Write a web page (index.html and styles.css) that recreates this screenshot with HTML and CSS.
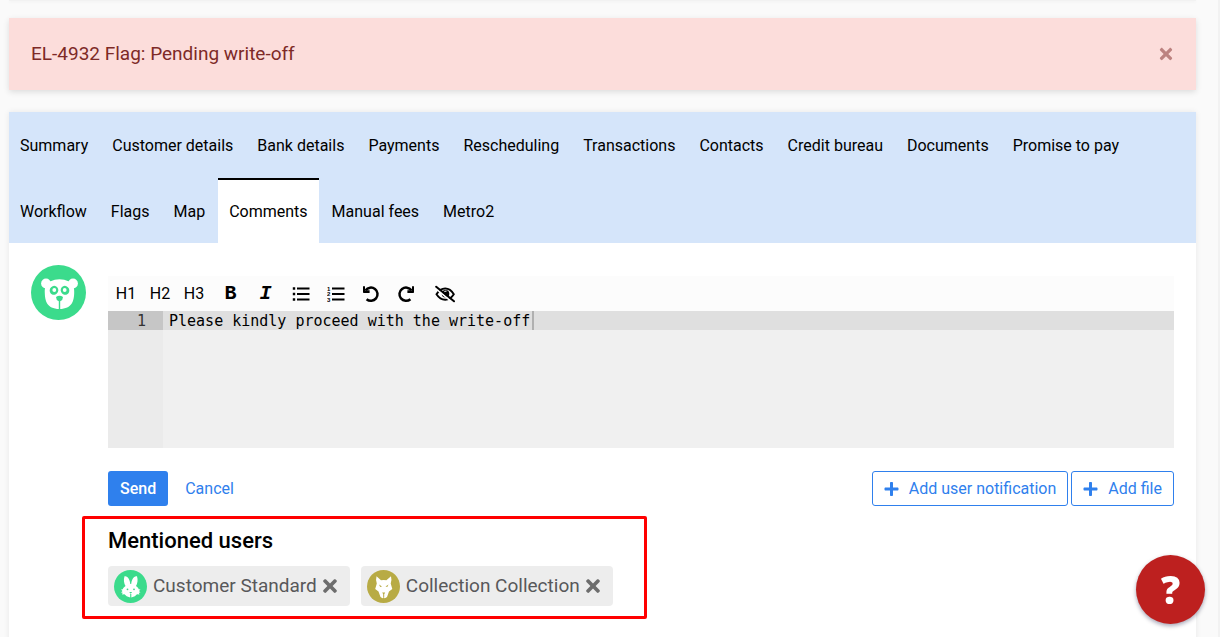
FILE: index.html
```html
<!DOCTYPE html>
<html lang="en">
<head>
<meta charset="utf-8">
<title>EL-4932 Comments</title>
<link rel="stylesheet" href="styles.css">
</head>
<body>
<svg class="defs" aria-hidden="true">
  <symbol id="times" viewBox="0 0 352 512"><path d="M242.72 256l100.07-100.07c12.28-12.28 12.28-32.19 0-44.48l-22.24-22.24c-12.28-12.28-32.19-12.28-44.48 0L176 189.28 75.93 89.21c-12.28-12.28-32.19-12.28-44.48 0L9.21 111.45c-12.28 12.28-12.28 32.19 0 44.48L109.28 256 9.21 356.07c-12.28 12.28-12.28 32.19 0 44.48l22.24 22.24c12.28 12.28 32.2 12.28 44.48 0L176 322.72l100.07 100.07c12.28 12.28 32.2 12.28 44.48 0l22.24-22.24c12.28-12.28 12.28-32.19 0-44.48L242.72 256z"/></symbol>
  <symbol id="plus" viewBox="0 0 448 512"><path d="M416 208H272V64c0-17.67-14.33-32-32-32h-32c-17.67 0-32 14.33-32 32v144H32c-17.67 0-32 14.33-32 32v32c0 17.67 14.33 32 32 32h144v144c0 17.67 14.33 32 32 32h32c17.67 0 32-14.33 32-32V304h144c17.67 0 32-14.33 32-32v-32c0-17.67-14.33-32-32-32z"/></symbol>
</svg>
<div class="page">
  <div class="previous-card"></div>
  <div class="alert" role="alert">
    <span>EL-4932 Flag: Pending write-off</span>
    <button class="alert-close" type="button" aria-label="Close"><svg width="14" height="18"><use href="#times"/></svg></button>
  </div>
  <main class="card">
    <nav class="tabs">
      <a class="tab" href="#">Summary</a>
      <a class="tab" href="#">Customer details</a>
      <a class="tab" href="#">Bank details</a>
      <a class="tab" href="#">Payments</a>
      <a class="tab" href="#">Rescheduling</a>
      <a class="tab" href="#">Transactions</a>
      <a class="tab" href="#">Contacts</a>
      <a class="tab" href="#">Credit bureau</a>
      <a class="tab" href="#">Documents</a>
      <a class="tab" href="#">Promise to pay</a>
      <a class="tab" href="#">Workflow</a>
      <a class="tab" href="#">Flags</a>
      <a class="tab" href="#">Map</a>
      <a class="tab active" href="#" aria-current="page">Comments</a>
      <a class="tab" href="#">Manual fees</a>
      <a class="tab" href="#">Metro2</a>
    </nav>
    <div class="comment">
      <svg class="avatar" width="55" height="55" viewBox="0 0 55 55" aria-hidden="true">
        <circle cx="27.5" cy="27.5" r="27.5" fill="#3bdb8c"/>
        <g fill="#fff">
          <circle cx="15" cy="18.5" r="4.900"/><circle cx="42" cy="18.5" r="4.900"/>
          <path d="M19 16.500Q28.500 12 38 16.500C42 18 43.500 22 43.200 28C43 35 41.500 44 28.500 44C15.500 44 14 35 13.800 28C13.500 22 15 18 19 16.500Z"/>
        </g>
        <g fill="#3bdb8c">
          <ellipse cx="23" cy="25.300" rx="4.300" ry="4.500" transform="rotate(25 23 25.300)"/>
          <ellipse cx="34" cy="25.300" rx="4.300" ry="4.500" transform="rotate(-25 34 25.300)"/>
          <path d="M25 32Q28.500 29.500 32 32Q32 35 29.200 36.300V44H27.800V36.300Q25 35 25 32Z"/>
        </g>
        <circle cx="23.300" cy="25" r="1.900" fill="#fff"/><circle cx="33.700" cy="25" r="1.900" fill="#fff"/>
      </svg>
      <div class="comment-main">
        <div class="editor">
          <div class="toolbar">
            <button type="button" class="heading">H1</button>
            <button type="button" class="heading">H2</button>
            <button type="button" class="heading">H3</button>
            <button type="button" class="bold" aria-label="Bold">B</button>
            <button type="button" class="italic" aria-label="Italic">I</button>
            <button type="button" aria-label="Bulleted list"><svg width="18" height="18" viewBox="0 0 18 18"><path d="M5 3.500h12.500M5 9h12.500M5 14.500h12.500" stroke="#000" stroke-width="2"/><path d="M.8 2.300h2.400v2.400H.8zM.8 7.800h2.400v2.400H.8zM.8 13.300h2.400v2.400H.8z"/></svg></button>
            <button type="button" aria-label="Numbered list"><svg width="18" height="18" viewBox="0 0 18 18"><path d="M5 3.500h12.500M5 9h12.500M5 14.500h12.500" stroke="#000" stroke-width="2"/><g class="list-digits"><text x="0" y="6">1</text><text x="0" y="11">2</text><text x="0" y="17">3</text></g></svg></button>
            <button type="button" aria-label="Undo"><svg width="18" height="18" viewBox="0 0 18 18"><path d="M3.600 5.300A6.600 6.600 0 1 1 4.600 14.200" fill="none" stroke="#000" stroke-width="2.500"/><path d="M1 1.200L3 1.200V5.300L7.600 5.300V8H1.800Q1 8 1 7.200Z"/></svg></button>
            <button type="button" aria-label="Redo"><svg width="18" height="18" viewBox="0 0 18 18"><path d="M14.400 5.300A6.600 6.600 0 1 0 13.400 14.200" fill="none" stroke="#000" stroke-width="2.500"/><path d="M17 1.200L15 1.200V5.300L10.400 5.300V8H16.200Q17 8 17 7.200Z"/></svg></button>
            <button type="button" class="preview" aria-label="Hide preview"><svg width="20" height="18" viewBox="0 0 20 18"><path d="M1.500 9.300Q5 3.500 10.200 3.500T18.800 9.300Q15.400 14.800 10.200 14.800T1.500 9.300Z" fill="none" stroke="#000" stroke-width="1.900"/><circle cx="10.500" cy="8.800" r="3.800"/><path d="M9 7.500a2 2 0 0 1 2.500-1.300" stroke="#fcfcfc" fill="none"/><path d="M.4 3.200L18.200 18" stroke="#fcfcfc" stroke-width="1.800"/><path d="M1.200 1.700L19 16.300" stroke="#000" stroke-width="2" stroke-linecap="round"/></svg></button>
          </div>
          <div class="code">
            <div class="gutter"><div class="line-number">1</div></div>
            <div class="code-area">
              <textarea aria-label="Comment" spellcheck="false">Please kindly proceed with the write-off</textarea>
              <span class="caret"></span>
            </div>
          </div>
        </div>
        <div class="actions">
          <button class="button primary" type="button">Send</button>
          <button class="button plain" type="button">Cancel</button>
          <div class="attach">
            <button class="button outline" type="button"><svg width="15" height="16"><use href="#plus"/></svg>Add user notification</button>
            <button class="button outline" type="button"><svg width="15" height="16"><use href="#plus"/></svg>Add file</button>
          </div>
        </div>
        <section class="mentions">
          <h2>Mentioned users</h2>
          <div class="chips">
            <span class="chip">
              <svg width="33" height="33" viewBox="0 0 33 33" aria-hidden="true"><circle cx="16.500" cy="16.500" r="16.500" fill="#3bdb8c"/><path fill="#fff" d="M10.500 6.300C13.800 5.500 16 10 16.300 14H17.200C17.500 10 19.700 5.500 23 6.300C24.200 10 23.500 13.500 22 16C23.800 17.300 24.500 18.300 24.700 19.300L26.500 19.500L25 21L26.500 22.500L24.800 22.800L25.500 24.500L23 24.300Q21.500 26.500 17.300 27.500V24H16.200V27.500Q12 26.500 10.500 24.300L8 24.500L8.700 22.800L7 22.500L8.500 21L7 19.500L8.800 19.300C9 18.300 9.700 17.300 11.500 16C10 13.500 9.300 10 10.500 6.300Z"/><g fill="#3bdb8c"><circle cx="13.500" cy="19.300" r=".9"/><circle cx="20" cy="19.300" r=".9"/><path d="M15.200 22h3l-1.500 1.700z"/></g></svg>
              <span>Customer Standard</span>
              <button type="button" aria-label="Remove Customer Standard"><svg width="14" height="20"><use href="#times"/></svg></button>
            </span>
            <span class="chip">
              <svg width="33" height="33" viewBox="0 0 33 33" aria-hidden="true"><circle cx="16.500" cy="16.500" r="16.500" fill="#b8ab45"/><path fill="#fff" d="M9.500 6.300L14 10.300Q16.700 9.500 19.400 10.300L24 6.300Q25 10 23.700 13.500L25.300 19L22 21.500L20 27Q18 28.800 16.700 27.800Q15.400 28.800 13.500 27L11.500 21.500L8.200 19L9.800 13.500Q8.500 10 9.500 6.300Z"/><g fill="#b8ab45"><path d="M12 14.500l3 2-1.800.4zM21.500 14.500l-3 2 1.800.4zM15.200 22.500h3l-1 1.800v3.500h-1v-3.500z"/></g></svg>
              <span>Collection Collection</span>
              <button type="button" aria-label="Remove Collection Collection"><svg width="14" height="20"><use href="#times"/></svg></button>
            </span>
          </div>
        </section>
      </div>
    </div>
  </main>
</div>
<button class="help" type="button" aria-label="Help">?</button>
</body>
</html>
```
FILE: styles.css
```css
* { box-sizing: border-box; }
body {
  margin: 0;
  min-height: 100vh;
  background: #fafafa;
  border-right: 2px solid #f2f2f2;
  font: 16px/24px Roboto, sans-serif;
  color: #000;
}
button { font: inherit; color: inherit; background: none; border: 0; padding: 0; cursor: pointer; }
svg { display: block; fill: currentColor; flex: none; }
.defs { position: absolute; width: 0; height: 0; }

.page {
  display: flex;
  flex-direction: column;
  min-height: 100vh;
  padding: 0 22px 0 9px;
}
.previous-card { height: 1px; margin-bottom: 17px; background: #f2f2f2; box-shadow: 0 1px 3px rgba(0, 0, 0, .06); }
.alert {
  display: flex;
  align-items: center;
  justify-content: space-between;
  min-height: 72px;
  margin-bottom: 22px;
  padding: 0 23px 0 22px;
  background: #fcdddb;
  color: #7e2a27;
  font-size: 19px;
  box-shadow: 0 2px 6px rgba(0, 0, 0, .12);
}
.alert-close { opacity: .5; }

.card { flex: 1; background: #fff; box-shadow: 0 0 6px rgba(0, 0, 0, .08); }
.tabs { display: flex; flex-wrap: wrap; gap: 1px 2px; background: #d5e5fa; }
.tab {
  padding: 20px 11px 19px;
  border-top: 2px solid transparent;
  color: #000;
  text-decoration: none;
}
.tab.active { background: #fff; border-top-color: #000; }

.comment { display: flex; gap: 22px; padding: 22px; }
.comment-main { flex: 1; min-width: 0; padding-top: 11px; }

.toolbar { display: flex; align-items: center; height: 35px; padding-left: 1px; background: #fcfcfc; }
.toolbar button { display: flex; justify-content: center; width: 35px; }
.toolbar .heading { width: 34px; }
.toolbar .bold { margin-left: 2px; font: bold 20px/24px "Liberation Mono", monospace; }
.toolbar .italic { font: italic bold 20px/24px "Liberation Mono", monospace; }
.toolbar .preview { width: 44px; }
.list-digits { font: bold 6px "Liberation Sans", sans-serif; }

.code { display: flex; height: 137px; background: #f0f0f0; font: 15px/18px "DejaVu Sans Mono", monospace; }
.gutter { width: 55px; background: #ebebeb; color: #333; text-align: right; }
.line-number { padding: 1px 17px 0 0; background: #c6c6c6; }
.code-area { position: relative; flex: 1; }
.code-area textarea {
  display: block;
  width: 100%;
  height: 100%;
  padding: 1px 6px 0;
  border: 0;
  outline: 0;
  resize: none;
  background: linear-gradient(#dfdfdf, #dfdfdf) 0 0 / 100% 19px no-repeat;
  color: #000;
  font: inherit;
}
.caret { position: absolute; top: 0; left: calc(40ch + 8px); width: 2px; height: 19px; background: #b0b0b0; }

.actions { display: flex; align-items: center; margin-top: 23px; gap: 5px; }
.attach { display: flex; gap: 3px; margin-left: auto; }
.button {
  display: flex;
  align-items: center;
  gap: 10px;
  height: 35px;
  padding: 0 12px;
  border-radius: 3px;
  color: #2f80ed;
}
.primary { background: #2f80ed; color: #fff; font-weight: 500; }
.outline { padding: 0 11px; border: 1px solid #2f80ed; }

.mentions {
  width: fit-content;
  margin: 10px 0 0 -26px;
  padding: 10px 31px 10px 23px;
  border: 3px solid #f00;
  border-radius: 2px;
}
.mentions h2 { margin: 0 0 13px; font-size: 22px; line-height: 24px; font-weight: 500; }
.chips { display: flex; flex-wrap: wrap; gap: 11px; }
.chip {
  display: flex;
  align-items: center;
  gap: 6px;
  height: 40px;
  padding: 0 13px 0 6px;
  border-radius: 4px;
  background: #ededed;
  color: #58585a;
  font-size: 19px;
}
.chip button { color: #6d6d6d; }

.help {
  position: fixed;
  right: 15px;
  bottom: 13px;
  width: 69px;
  height: 69px;
  border-radius: 50%;
  background: #bd201f;
  color: #fff;
  font: 800 38px/69px "Open Sans", sans-serif;
  box-shadow: 0 2px 4px rgba(0, 0, 50, .35);
}
```
